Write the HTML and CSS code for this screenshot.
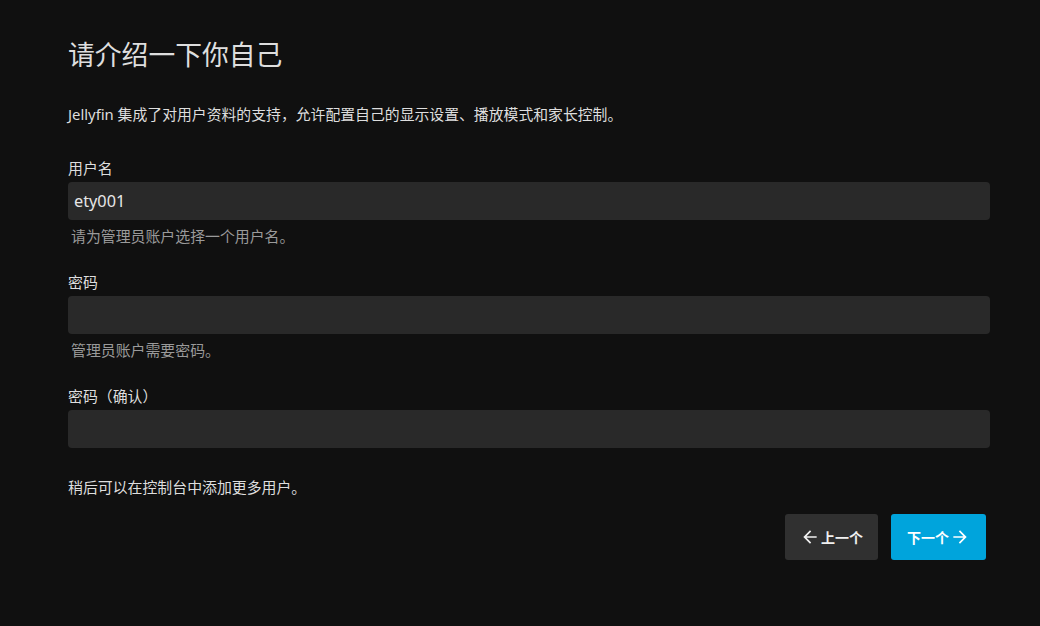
FILE: index.html
```html
<!DOCTYPE html>
<html lang="zh-CN">
<head>
  <meta charset="UTF-8">
  <title>Jellyfin</title>
  <meta name="viewport" content="width=device-width, initial-scale=1.0">
  <link rel="stylesheet" href="styles.css">
</head>
<body>

  <div class="wizard">
    <h1>请介绍一下你自己</h1>
    <p class="intro">Jellyfin 集成了对用户资料的支持，允许配置自己的显示设置、播放模式和家长控制。</p>

    <form id="userForm">
      <div class="field">
        <label for="username">用户名</label>
        <input type="text" id="username" value="ety001">
        <div class="hint">请为管理员账户选择一个用户名。</div>
      </div>

      <div class="field">
        <label for="password">密码</label>
        <input type="password" id="password">
        <div class="hint">管理员账户需要密码。</div>
      </div>

      <div class="field">
        <label for="passwordConfirm">密码（确认）</label>
        <input type="password" id="passwordConfirm">
      </div>

      <p class="note">稍后可以在控制台中添加更多用户。</p>

      <div class="actions">
        <button type="button" class="btn">
          <svg viewBox="0 0 24 24"><path d="M20 11H7.83l5.59-5.59L12 4l-8 8 8 8 1.41-1.41L7.83 13H20v-2z"/></svg>
          <span>上一个</span>
        </button>
        <button type="submit" class="btn btn-next">
          <span>下一个</span>
          <svg viewBox="0 0 24 24"><path d="M12 4l-1.41 1.41L16.17 11H4v2h12.17l-5.58 5.59L12 20l8-8z"/></svg>
        </button>
      </div>
    </form>
  </div>

</body>
</html>
```

FILE: styles.css
```css
body {
  margin: 0;
  background-color: #101010;
  color: #dedede;
  font-family: "Noto Sans", "Noto Sans CJK SC", sans-serif;
}

.wizard {
  padding: 39px 50px 0 68px;
}

h1 {
  margin: 0;
  font-size: 26.8px;
  font-weight: 400;
  line-height: 32px;
}

.intro {
  margin: 33px 0 0;
  font-size: 14.85px;
  line-height: 20px;
}

.field {
  margin-top: 26px;
}

.intro + form .field:first-child {
  margin-top: 34px;
}

label {
  display: block;
  font-size: 14.9px;
  line-height: 20px;
  margin-bottom: 4px;
}

input[type="text"],
input[type="password"] {
  display: block;
  width: 100%;
  height: 38px;
  box-sizing: border-box;
  padding: 0 6px;
  background-color: #292929;
  color: #e6e6e6;
  border: 0;
  border-radius: 4px;
  font-family: inherit;
  font-size: 16.3px;
  outline: none;
}

.hint {
  margin-top: 6px;
  padding-left: 3px;
  font-size: 14.9px;
  line-height: 20px;
  color: #9a9a9a;
}

.note {
  margin: 29px 0 0;
  font-size: 14.9px;
  line-height: 20px;
}

.actions {
  display: flex;
  justify-content: flex-end;
  gap: 13px;
  margin-top: 17px;
  padding-right: 4px;
}

.btn {
  display: flex;
  align-items: center;
  justify-content: center;
  gap: 1px;
  height: 46px;
  width: 93px;
  padding: 0;
  border: 0;
  border-radius: 3px;
  background-color: #303030;
  color: #f0f0f0;
  font-family: inherit;
  font-size: 14px;
  font-weight: 700;
  cursor: pointer;
}

.btn svg {
  width: 20px;
  height: 20px;
  fill: currentColor;
}

.btn-next {
  width: 95px;
  background-color: #00a4dc;
  color: #fff;
}
```
